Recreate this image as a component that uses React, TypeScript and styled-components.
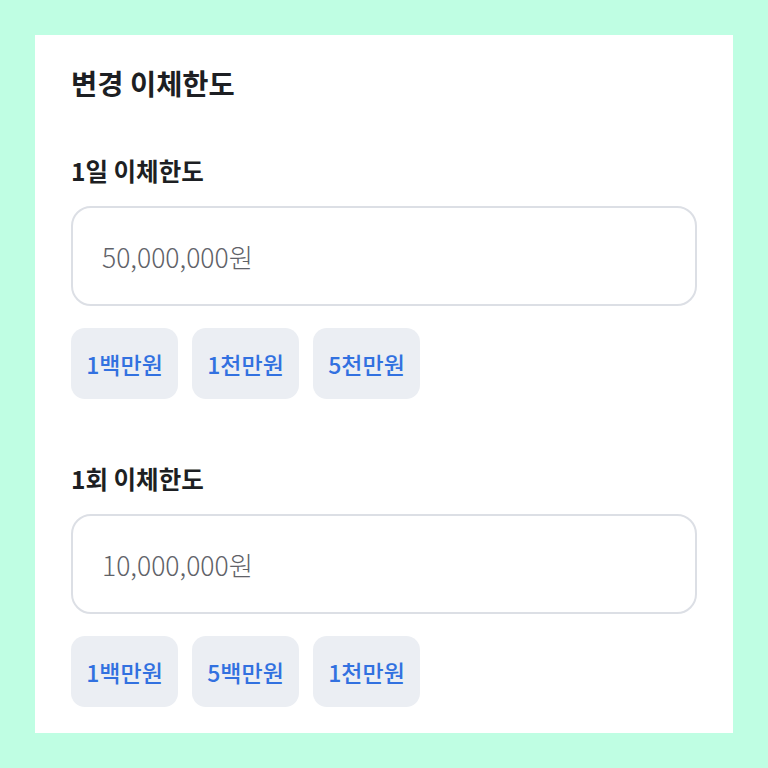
import React, { FC } from 'react';
import styled, { createGlobalStyle } from 'styled-components';

const GlobalStyle = createGlobalStyle`
  html, body {
    margin: 0;
    padding: 0;
    background: #bffee3;
  }
  body {
    font-family: "Noto Sans CJK KR", "Noto Sans", sans-serif;
  }
`;

const Page = styled.div`
  width: 768px;
  height: 768px;
  box-sizing: border-box;
  padding: 35px;
  background: #bffee3;
`;

const Card = styled.section`
  width: 698px;
  height: 698px;
  box-sizing: border-box;
  background: #ffffff;
  padding: 28px 36px 27px;
  display: flex;
  flex-direction: column;
`;

const Title = styled.h1`
  margin: 0 0 53px;
  font-size: 28.5px;
  line-height: 40px;
  font-weight: 600;
  color: #1d1f23;
`;

const Section = styled.div`
  display: flex;
  flex-direction: column;
  & + & {
    margin-top: 65px;
  }
`;

const Label = styled.h2`
  margin: 0 0 20px;
  font-size: 24.5px;
  line-height: 30px;
  font-weight: 600;
  color: #1d1f23;
`;

const AmountInput = styled.input`
  box-sizing: border-box;
  width: 100%;
  height: 100px;
  border: 2px solid #dcdfe5;
  border-radius: 20px;
  padding: 0 29px;
  font-family: inherit;
  font-size: 26.5px;
  font-weight: 300;
  color: #1d1f23;
  outline: none;
  &::placeholder {
    color: #5f6268;
  }
`;

const Chips = styled.div`
  display: flex;
  gap: 14px;
  margin-top: 22px;
`;

const Chip = styled.button`
  width: 107px;
  height: 71px;
  border: none;
  border-radius: 14px;
  background: #ebeef3;
  color: #3271e0;
  font-family: inherit;
  font-size: 23px;
  font-weight: 500;
  padding: 0;
  cursor: pointer;
`;

interface LimitProps {
  label: string;
  placeholder: string;
  options: string[];
}

const LimitField: FC<LimitProps> = ({ label, placeholder, options }) => (
  <Section>
    <Label>{label}</Label>
    <AmountInput placeholder={placeholder} />
    <Chips>
      {options.map((o) => (
        <Chip key={o}>{o}</Chip>
      ))}
    </Chips>
  </Section>
);

const App: FC = () => (
  <>
    <GlobalStyle />
    <Page>
      <Card>
        <Title>변경 이체한도</Title>
        <LimitField
          label="1일 이체한도"
          placeholder="50,000,000원"
          options={['1백만원', '1천만원', '5천만원']}
        />
        <LimitField
          label="1회 이체한도"
          placeholder="10,000,000원"
          options={['1백만원', '5백만원', '1천만원']}
        />
      </Card>
    </Page>
  </>
);

export default App;
